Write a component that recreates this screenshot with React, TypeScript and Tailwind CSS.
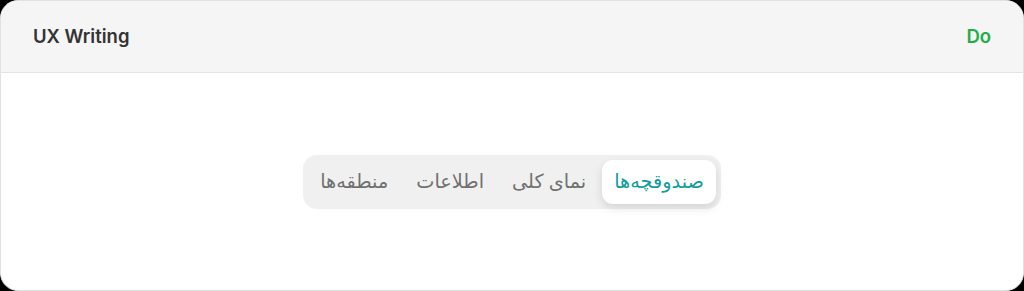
import { useState } from "react";

const tabs = ["صندوقچه‌ها", "نمای کلی", "اطلاعات", "منطقه‌ها"];

function App() {
  const [active, setActive] = useState(0);

  return (
    <div className="h-[291px] w-[1024px] bg-black">
      <div className="flex h-full flex-col overflow-hidden rounded-[18px] border border-[#e2e2e2] bg-white">
        <div className="flex h-[72px] shrink-0 items-center justify-between border-b border-[#e4e4e4] bg-[#f5f5f5] px-8 font-['Inter',sans-serif]">
          <h2 className="text-[18.5px] font-semibold text-[#333333]">UX Writing</h2>
          <span className="text-[18.5px] font-semibold text-[#1fae48]">Do</span>
        </div>
        <div className="flex flex-1 items-center justify-center">
          <div
            dir="rtl"
            className="flex gap-1 rounded-[14px] bg-[#f0f0f0] p-[5px] font-['Noto_Sans','DejaVu_Sans',sans-serif]"
          >
            {tabs.map((t, i) => (
              <button
                key={t}
                onClick={() => setActive(i)}
                className={
                  i === active
                    ? "h-[44px] rounded-[11px] bg-white px-3 text-[19.3px] text-[#139c9c] shadow-[0_4px_10px_rgba(0,0,0,0.12)]"
                    : "h-[44px] rounded-[11px] px-3 text-[19.3px] text-[#707070]"
                }
              >
                {t}
              </button>
            ))}
          </div>
        </div>
      </div>
    </div>
  );
}

export default App;
